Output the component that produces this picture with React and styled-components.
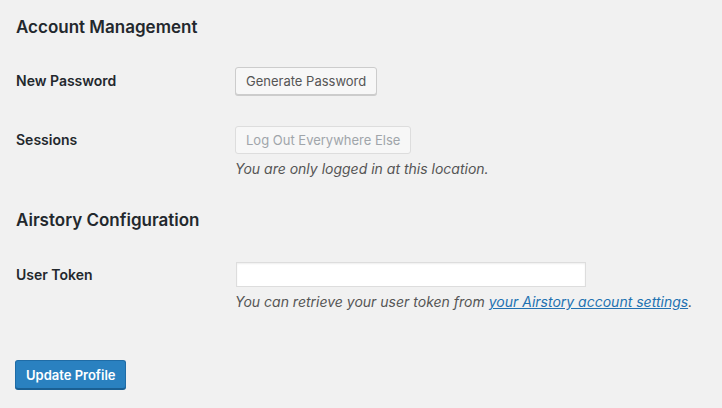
import React from 'react'
import styled, { createGlobalStyle } from 'styled-components'

const Global = createGlobalStyle`
  html, body {
    margin: 0;
    background: #f1f1f1;
  }
  body {
    font-family: Inter, "Noto Sans", "Liberation Sans", sans-serif;
    color: #23282d;
    font-size: 14px;
  }
`;

const Page = styled.div`
  padding: 16px 16px 0;
  width: 722px;
  height: 408px;
  box-sizing: border-box;
  overflow: hidden;
`;

const Heading = styled.h2`
  margin: ${(p) => (p.$first ? '0' : '30px 0 0')};
  font-size: 17px;
  font-weight: 600;
  line-height: 23px;
  color: #23282d;
`;

const Row = styled.div`
  display: flex;
  align-items: flex-start;
  margin-top: ${(p) => p.$gap}px;
`;

const Label = styled.label`
  width: 219px;
  flex-shrink: 0;
  font-weight: 600;
  font-size: 14px;
  line-height: ${(p) => p.$lh}px;
`;

const Field = styled.div`
  display: flex;
  flex-direction: column;
  align-items: flex-start;
`;

const Button = styled.button`
  height: 28px;
  padding: 0 10px;
  font-family: inherit;
  font-size: 13px;
  line-height: 26px;
  border-radius: 3px;
  border: 1px solid #ccc;
  background: #f7f7f7;
  color: #555;
  box-shadow: 0 1px 0 #ccc;
  cursor: pointer;

  &:disabled {
    color: #a0a5aa;
    border-color: #ddd;
    box-shadow: none;
    cursor: default;
  }
`;

const Description = styled.p`
  margin: 5px 0 0;
  font-size: 14px;
  line-height: 20px;
  font-style: italic;
  color: #555;
`;

const Link = styled.a`
  color: #2271b1;
  text-decoration: underline;
`;

const Input = styled.input`
  width: 350px;
  height: 25px;
  box-sizing: border-box;
  margin: 0 0 0 1px;
  border: 1px solid #ddd;
  box-shadow: inset 0 1px 2px rgba(0, 0, 0, 0.07);
  background: #fff;
  font-family: inherit;
  font-size: 14px;
  padding: 2px 6px;
  outline: none;
`;

const Submit = styled.button`
  margin: 48px 0 0 -1px;
  height: 29px;
  padding: 0 10px;
  font-family: inherit;
  font-size: 13px;
  font-weight: 600;
  color: #fff;
  background: #2a81c0;
  border: 1px solid #1f6ca6;
  border-bottom-color: #1a5f93;
  border-radius: 3px;
  box-shadow: 0 1px 0 #1a5f93;
  cursor: pointer;
`;

export default function App() {
  return (
    <>
      <Global />
      <Page>
        <Heading $first>Account Management</Heading>

        <Row $gap={28}>
          <Label $lh={28}>New Password</Label>
          <Field>
            <Button type="button">Generate Password</Button>
          </Field>
        </Row>

        <Row $gap={31}>
          <Label $lh={28}>Sessions</Label>
          <Field>
            <Button type="button" disabled>Log Out Everywhere Else</Button>
            <Description>You are only logged in at this location.</Description>
          </Field>
        </Row>

        <Heading>Airstory Configuration</Heading>

        <Row $gap={30}>
          <Label $lh={25}>User Token</Label>
          <Field>
            <Input type="text" />
            <Description>
              You can retrieve your user token from{' '}
              <Link href="#">your Airstory account settings</Link>.
            </Description>
          </Field>
        </Row>

        <Submit type="button">Update Profile</Submit>
      </Page>
    </>
  );
}
